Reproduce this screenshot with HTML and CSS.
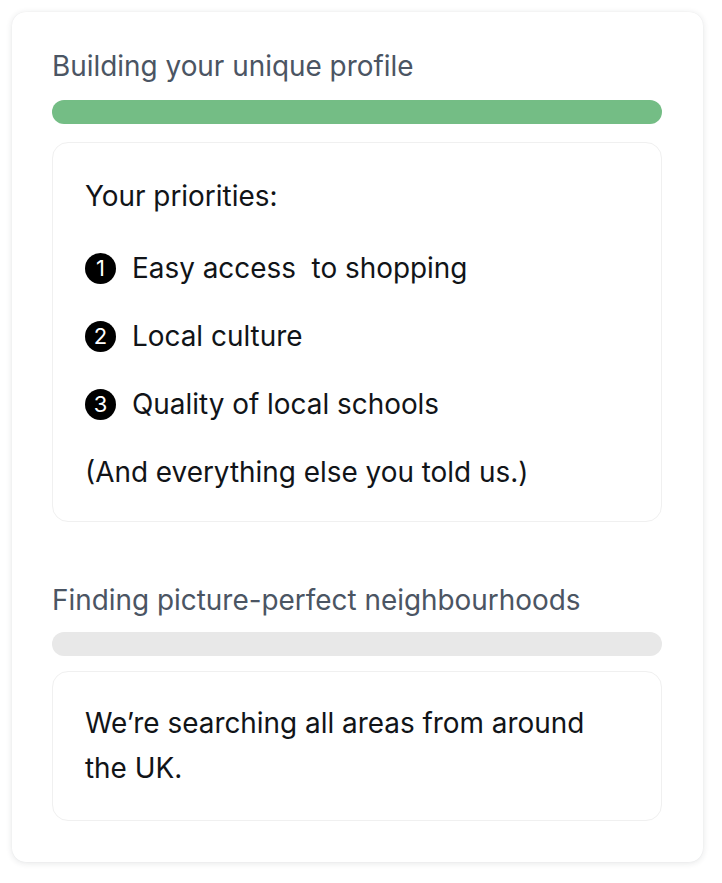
FILE: index.html
```html
<!DOCTYPE html>
<html>
<head>
<meta charset="utf-8">
<link rel="stylesheet" href="styles.css">
</head>
<body>
<div class="card">
  <section class="step">
    <h2 class="step-title">Building your unique profile</h2>
    <div class="bar bar-done"></div>
    <div class="box box-priorities">
      <p class="line">Your priorities:</p>
      <ol class="list">
        <li class="item"><span class="num">1</span><span>Easy access&nbsp; to shopping</span></li>
        <li class="item"><span class="num">2</span><span>Local culture</span></li>
        <li class="item"><span class="num">3</span><span>Quality of local schools</span></li>
      </ol>
      <p class="line">(And everything else you told us.)</p>
    </div>
  </section>
  <section class="step step-second">
    <h2 class="step-title">Finding picture-perfect neighbourhoods</h2>
    <div class="bar bar-pending"></div>
    <div class="box box-search">
      <p class="line">We’re searching all areas from around the UK.</p>
    </div>
  </section>
</div>
</body>
</html>
```

FILE: styles.css
```css
* { box-sizing: border-box; }
html, body { margin: 0; padding: 0; background: #ffffff; }
body {
  font-family: Inter, "Noto Sans", sans-serif;
  padding: 12px 19px 21px 12px;
}
.card {
  width: 691px;
  background: #fff;
  border-radius: 14px;
  box-shadow: 0 1px 6px rgba(30, 40, 50, 0.12), 0 0 1px rgba(30, 40, 50, 0.08);
  padding: 32px 41px 41px 40px;
}
.step-title {
  margin: 0;
  font-size: 27.9px;
  font-weight: 400;
  line-height: 45px;
  color: #4b5563;
}
.bar {
  height: 24px;
  border-radius: 12px;
  margin-top: 11px;
}
.bar-done { background: #74bd85; }
.bar-pending { background: #e8e8e8; margin-top: 9px; }
.box {
  border: 1px solid #f0f0f0;
  border-radius: 16px;
  padding: 29px 32px;
  color: #111418;
  font-size: 27.9px;
  line-height: 45px;
}
.box-priorities { margin-top: 18px; padding-top: 31px; padding-bottom: 26px; }
.box-search { margin-top: 15px; padding-right: 40px; }
.step-second { margin-top: 56px; }
.line { margin: 0; }
.list {
  list-style: none;
  margin: 27px 0 23px;
  padding: 0;
  display: flex;
  flex-direction: column;
  gap: 23px;
}
.item {
  display: flex;
  align-items: center;
  gap: 16px;
}
.num {
  width: 31px;
  height: 31px;
  border-radius: 50%;
  background: #000;
  color: #fff;
  font-size: 22px;
  line-height: 31px;
  text-align: center;
  flex: none;
}
```
